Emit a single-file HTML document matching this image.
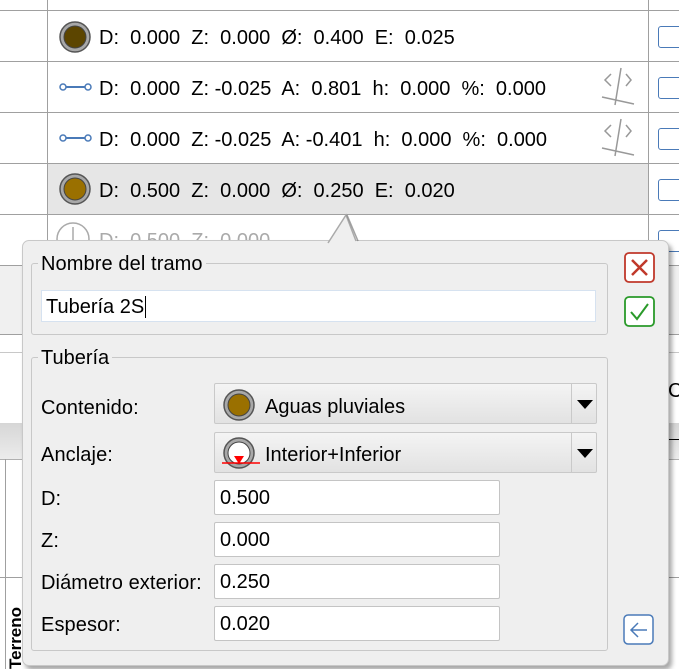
<!DOCTYPE html>
<html><head><meta charset="utf-8"><style>
*{margin:0;padding:0;box-sizing:border-box}
body{width:679px;height:669px;overflow:hidden;background:#fff;position:relative;font-family:"Liberation Sans",sans-serif;font-size:20px;color:#000}
.a{position:absolute}
.hl{position:absolute;height:1px;background:#a0a0a0}
.vl{position:absolute;width:1px;background:#a0a0a0}
.rt{position:absolute;left:99px;white-space:pre;font-size:20px;letter-spacing:0px}
.cb{position:absolute;left:658px;width:24px;height:22px;border:1.5px solid #4a7ab8;border-radius:3px;background:#fff}
.lab{position:absolute;left:41px;font-size:20px;letter-spacing:0.1px}
.inp{position:absolute;left:214px;width:286px;height:35px;background:#fff;border:1px solid #c4c4c4;border-radius:2px;padding-left:5px;line-height:35px;font-size:20px}
.combo{position:absolute;left:214px;width:383px;height:41px;border:1px solid #c9c9c9;border-radius:2px;background:linear-gradient(#f4f4f4,#e2e2e2)}
</style></head><body>
<div class="a" style="left:48px;top:163px;width:600px;height:51px;background:#e6e6e6"></div>
<div class="hl" style="left:0;top:10px;width:679px"></div>
<div class="hl" style="left:0;top:61px;width:679px"></div>
<div class="hl" style="left:0;top:112px;width:679px"></div>
<div class="hl" style="left:0;top:163px;width:679px"></div>
<div class="hl" style="left:0;top:214px;width:679px"></div>
<div class="vl" style="left:47px;top:0;height:240px"></div>
<div class="vl" style="left:648px;top:0;height:240px"></div>
<div class="a" style="left:0;top:265px;width:679px;height:70px;background:#f0f0f0;border-top:1px solid #a0a0a0;border-bottom:1px solid #a0a0a0"></div>
<div class="hl" style="left:0;top:352px;width:679px;background:#c8c8c8"></div>
<div class="a" style="left:0;top:423px;width:679px;height:36px;background:linear-gradient(#d6d6d6,#ececec)"></div>
<div class="hl" style="left:660px;top:439px;width:19px;background:#000"></div>
<div class="hl" style="left:0;top:459px;width:679px;background:#b0b0b0"></div>
<div class="vl" style="left:5px;top:459px;height:210px"></div>
<div class="hl" style="left:0;top:577px;width:679px"></div>
<div class="a" style="left:6px;top:669px;font-size:17px;font-weight:bold;transform:rotate(-90deg);transform-origin:left top;white-space:nowrap">Terreno</div>
<div class="a" style="left:668px;top:380px;font-size:20px">C</div>

<svg class="a" style="left:58px;top:20px" width="34" height="34"><circle cx="17" cy="17" r="15" fill="#a8a8a8" stroke="#555" stroke-width="1.5"/><circle cx="17" cy="17" r="11" fill="#5c4500" stroke="#444" stroke-width="1"/></svg>
<div class="rt" style="top:27px">D:  0.000  Z:  0.000  Ø:  0.400  E:  0.025</div>
<div class="cb" style="top:26px"></div>
<svg class="a" style="left:58px;top:80px" width="40" height="14"><circle cx="5" cy="7" r="3" fill="none" stroke="#4a7ab8" stroke-width="1.5"/><circle cx="30" cy="7" r="3" fill="none" stroke="#4a7ab8" stroke-width="1.5"/><line x1="8" y1="7" x2="27" y2="7" stroke="#4a7ab8" stroke-width="2"/></svg>
<div class="rt" style="top:78px">D:  0.000  Z: -0.025  A:  0.801  h:  0.000  %:  0.000</div>
<svg class="a" style="left:600px;top:66px" width="40" height="40" stroke="#999" stroke-width="1.5" fill="none"><path d="M11 8 L5 14 L11 20 M26 8 L31 14 L26 20 M21 2 L15 39 M2 31 L34 38"/></svg>
<div class="cb" style="top:77px"></div>
<svg class="a" style="left:58px;top:131px" width="40" height="14"><circle cx="5" cy="7" r="3" fill="none" stroke="#4a7ab8" stroke-width="1.5"/><circle cx="30" cy="7" r="3" fill="none" stroke="#4a7ab8" stroke-width="1.5"/><line x1="8" y1="7" x2="27" y2="7" stroke="#4a7ab8" stroke-width="2"/></svg>
<div class="rt" style="top:129px">D:  0.000  Z: -0.025  A: -0.401  h:  0.000  %:  0.000</div>
<svg class="a" style="left:600px;top:117px" width="40" height="40" stroke="#999" stroke-width="1.5" fill="none"><path d="M11 8 L5 14 L11 20 M26 8 L31 14 L26 20 M21 2 L15 39 M2 31 L34 38"/></svg>
<div class="cb" style="top:128px"></div>
<svg class="a" style="left:58px;top:172px" width="34" height="34"><circle cx="17" cy="17" r="15" fill="#a8a8a8" stroke="#555" stroke-width="1.5"/><circle cx="17" cy="17" r="11" fill="#9a7000" stroke="#444" stroke-width="1"/></svg>
<div class="rt" style="top:180px">D:  0.500  Z:  0.000  Ø:  0.250  E:  0.020</div>
<div class="cb" style="top:179px"></div>
<svg class="a" style="left:54px;top:221px" width="40" height="30"><circle cx="19" cy="18" r="16" fill="none" stroke="#aaa" stroke-width="1.5"/><path d="M19 6 V20 M10 20 H28" stroke="#aaa" stroke-width="1.5"/></svg>
<div class="rt" style="top:230px;color:#aaa">D:  0.500  Z:  0.000</div>
<div class="cb" style="top:230px"></div>

<div class="a" style="left:22px;top:240px;width:647px;height:426px;background:#efefef;border:1px solid #c8c8c8;border-radius:7px;box-shadow:3px 4px 5px rgba(0,0,0,0.35)"></div>
<svg class="a" style="left:250px;top:212px" width="120" height="32"><path d="M0 31 L78 31 L96 3 L106 29 L120 31" fill="#efefef"/><path d="M78 31 L96 3 L106 29" fill="none" stroke="#aaa" stroke-width="1.5"/><path d="M97 3 L108 29" stroke="#666" stroke-width="1.5" opacity=".6"/></svg>

<div class="a" style="left:31px;top:263px;width:577px;height:72px;border:1px solid #c8c8c8;border-radius:3px"></div>
<div class="a" style="left:38px;top:253px;background:#efefef;padding:0 3px;font-size:20px;letter-spacing:0.1px">Nombre del tramo</div>
<div class="a" style="left:41px;top:290px;width:555px;height:32px;background:#fff;border:1px solid #d6e2f0;padding-left:4px;line-height:32px;font-size:20px">Tubería 2S<span style="border-left:1px solid #000;margin-left:1px"></span></div>

<div class="a" style="left:31px;top:357px;width:577px;height:294px;border:1px solid #c8c8c8;border-radius:3px"></div>
<div class="a" style="left:38px;top:347px;background:#efefef;padding:0 3px;font-size:20px">Tubería</div>

<div class="lab" style="top:397px">Contenido:</div>
<div class="combo" style="top:383px"></div>
<div class="vl" style="left:571px;top:384px;height:39px;background:#c9c9c9"></div>
<svg class="a" style="left:222px;top:388px" width="34" height="34"><circle cx="17" cy="17" r="15" fill="#a8a8a8" stroke="#555" stroke-width="1.5"/><circle cx="17" cy="17" r="11" fill="#9a7000" stroke="#444" stroke-width="1"/></svg>
<div class="a" style="left:265px;top:396px;font-size:20px">Aguas pluviales</div>
<svg class="a" style="left:576px;top:398px" width="18" height="12"><path d="M1 2 L17 2 L9 11Z" fill="#000"/></svg>

<div class="lab" style="top:444px">Anclaje:</div>
<div class="combo" style="top:432px"></div>
<div class="vl" style="left:571px;top:433px;height:39px;background:#c9c9c9"></div>
<svg class="a" style="left:222px;top:436px" width="40" height="34"><circle cx="17" cy="17" r="15" fill="#a8a8a8" stroke="#555" stroke-width="1.5"/><circle cx="17" cy="17" r="11" fill="#fff" stroke="#444" stroke-width="1"/><path d="M12 20 L22 20 L17 28Z" fill="#f00"/><line x1="0" y1="27" x2="38" y2="27" stroke="#f00" stroke-width="1.5"/></svg>
<div class="a" style="left:265px;top:444px;font-size:20px">Interior+Inferior</div>
<svg class="a" style="left:576px;top:447px" width="18" height="12"><path d="M1 2 L17 2 L9 11Z" fill="#000"/></svg>

<div class="lab" style="top:488px">D:</div><div class="inp" style="top:480px">0.500</div>
<div class="lab" style="top:530px">Z:</div><div class="inp" style="top:522px">0.000</div>
<div class="lab" style="top:572px">Diámetro exterior:</div><div class="inp" style="top:564px">0.250</div>
<div class="lab" style="top:614px">Espesor:</div><div class="inp" style="top:606px">0.020</div>

<svg class="a" style="left:624px;top:252px" width="32" height="32"><rect x="1" y="1" width="29" height="29" rx="4" fill="#fff" stroke="#c0392b" stroke-width="1.8"/><path d="M8 8 L23 23 M23 8 L8 23" stroke="#c0392b" stroke-width="2.5"/></svg>
<svg class="a" style="left:624px;top:296px" width="32" height="32"><rect x="1" y="1" width="29" height="29" rx="4" fill="#fff" stroke="#2a9a2a" stroke-width="1.8"/><path d="M7 16 L13 23 L24 8" fill="none" stroke="#2a9a2a" stroke-width="2"/></svg>
<svg class="a" style="left:623px;top:614px" width="32" height="32"><rect x="1" y="1" width="29" height="29" rx="4" fill="#fff" stroke="#4a7ab8" stroke-width="1.5"/><path d="M24 16 H8 M15 9 L8 16 L15 23" fill="none" stroke="#4a7ab8" stroke-width="1.5"/></svg>
</body></html>
